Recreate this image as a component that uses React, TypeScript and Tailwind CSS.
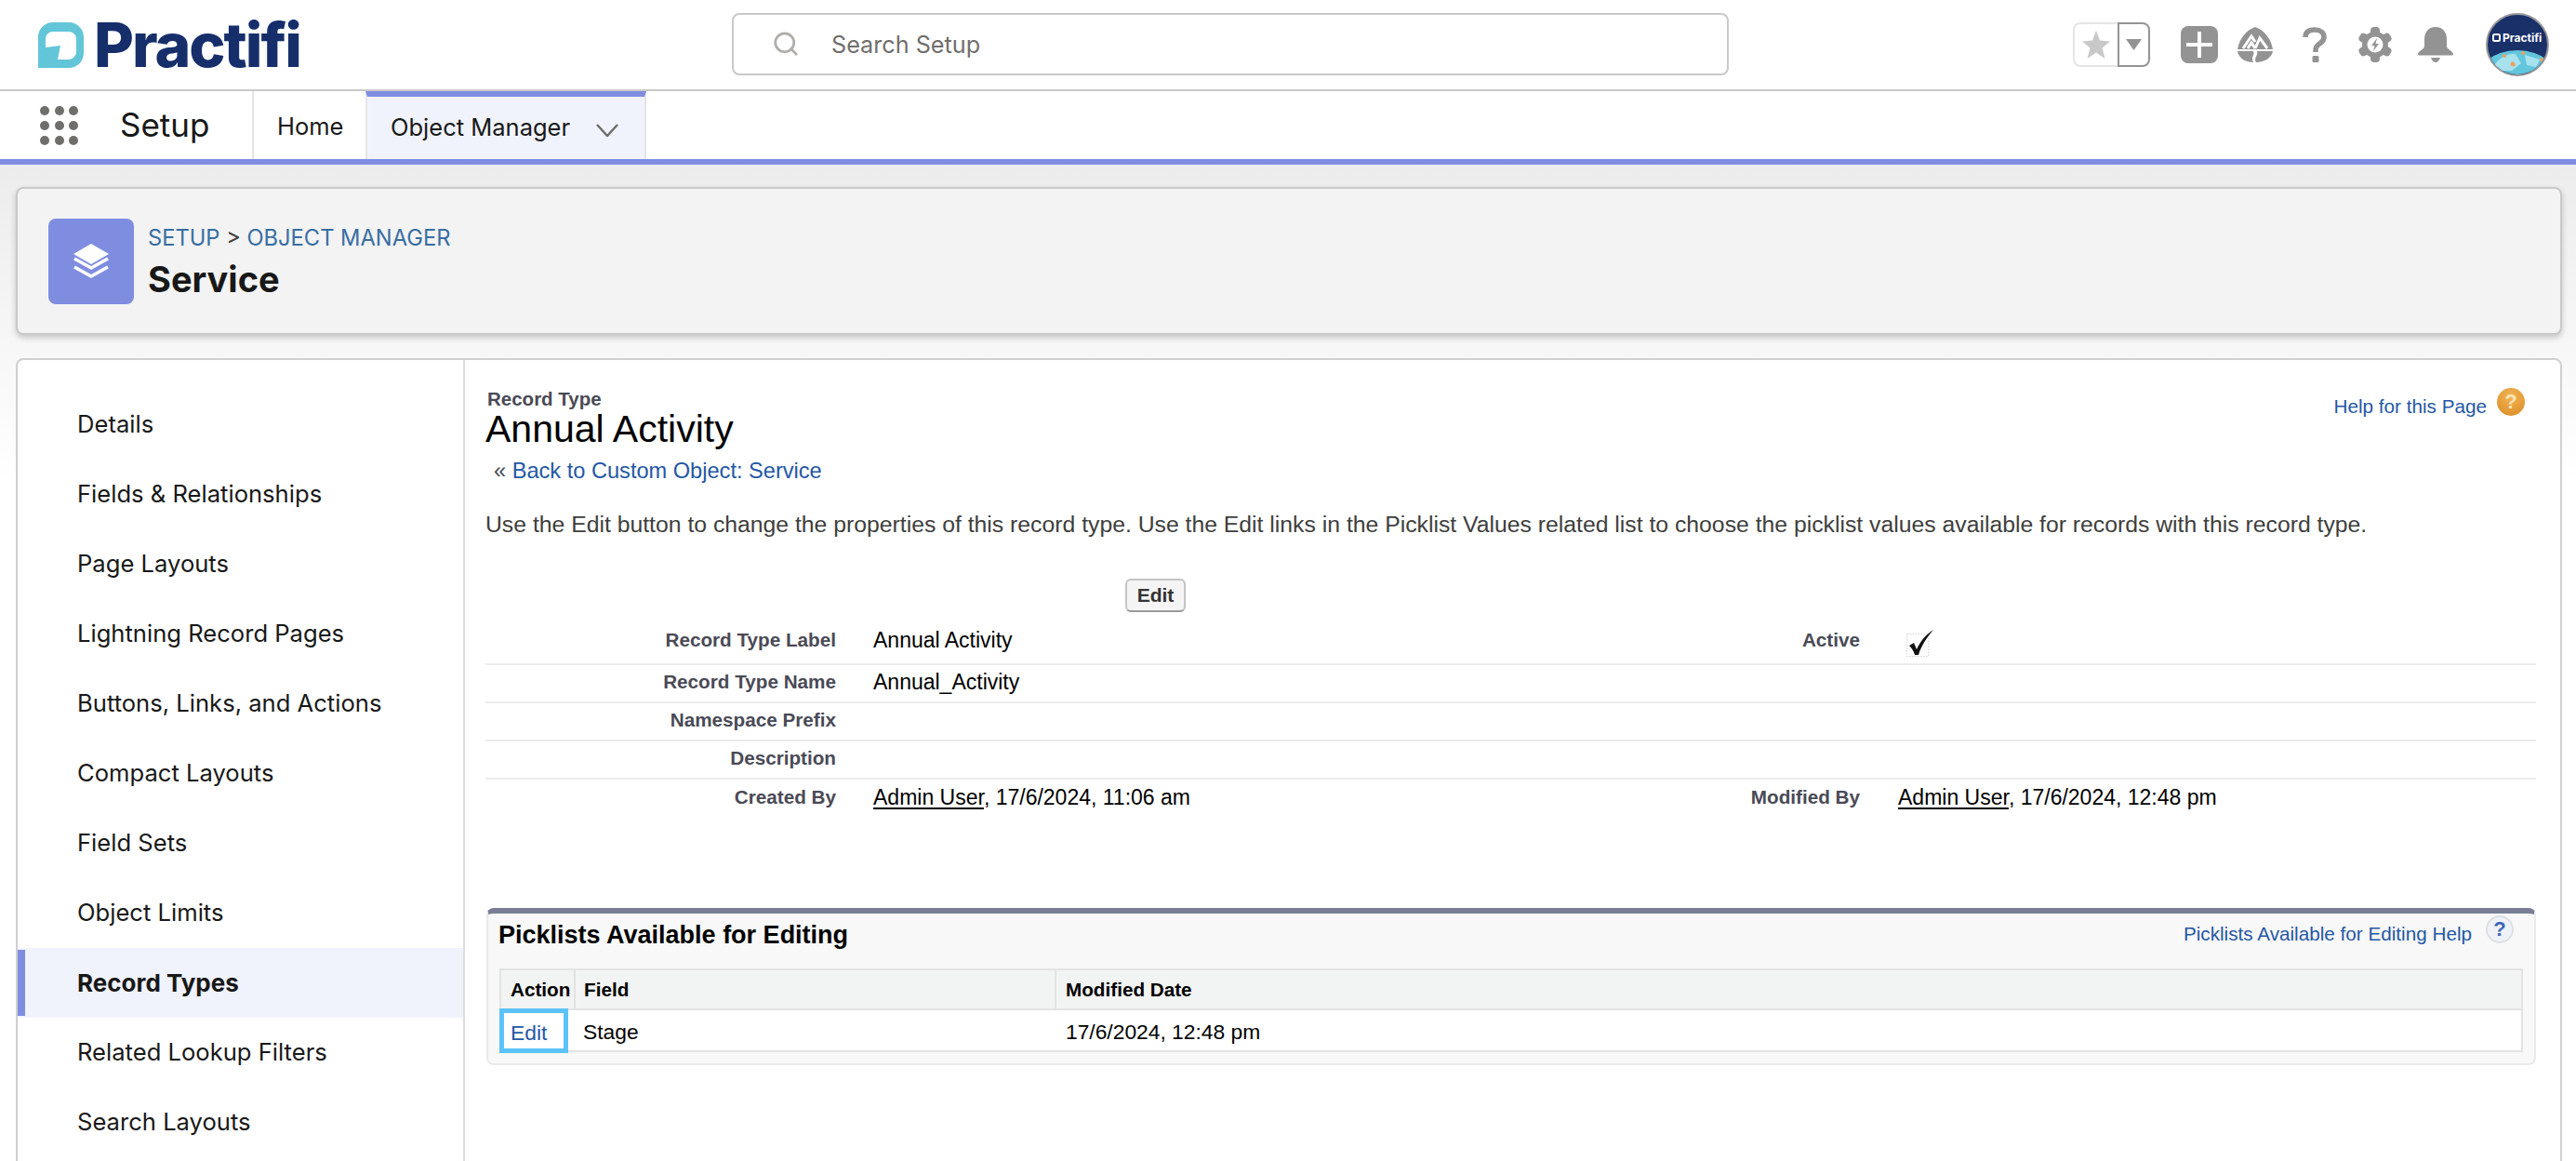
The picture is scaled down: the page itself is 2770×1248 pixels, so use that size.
import { Search } from 'lucide-react';

const sideItems = [
  'Details',
  'Fields & Relationships',
  'Page Layouts',
  'Lightning Record Pages',
  'Buttons, Links, and Actions',
  'Compact Layouts',
  'Field Sets',
  'Object Limits',
  'Record Types',
  'Related Lookup Filters',
  'Search Layouts',
];

const inter = 'font-[Inter,sans-serif]';
const arial = "font-['Liberation_Sans',Arial,sans-serif]";

function LogoMark() {
  return (
    <svg width="49" height="49" viewBox="0 0 49 49" className="shrink-0">
      <path
        fillRule="evenodd"
        fill="#62c6d8"
        d="M0 16C0 7 7 0 16 0H33C42 0 49 7 49 16V33C49 42 42 49 33 49H0ZM8 27V18C8 13 12 10 16 10H33C37 10 41 13 41 18V32C41 36 37 40 33 40H21L24 25Z"
      />
    </svg>
  );
}

function TrailheadIcon() {
  return (
    <svg width="38" height="38" viewBox="0 0 38 38">
      <path fill="#939393" d="M19 0C28 3 36 12 38 24H0C2 12 10 3 19 0Z" />
      <path fill="none" stroke="#fff" strokeWidth="3" d="M6 23L15 10L19 16M11 23L15 17L19 23M19 23L24 12L32 23" />
      <path fill="#939393" d="M0 26H17C19 30 14 32 17 38C8 38 1 33 0 26ZM21 26H38C37 33 29 38 20 38C17 33 23 30 21 26Z" />
    </svg>
  );
}

function HelpIcon() {
  return (
    <svg width="26" height="38" viewBox="0 0 26 38">
      <path fill="none" stroke="#939393" strokeWidth="5.5" d="M3 11C3 5 7 3 13 3C19 3 23 6 23 11C23 16 19 17 16 20C14 22 14 23 14 27" />
      <rect x="10.5" y="31" width="7" height="7" rx="1.5" fill="#939393" />
    </svg>
  );
}

function GearIcon() {
  return (
    <svg width="36" height="38" viewBox="0 0 36 38">
      <g fill="#939393">
        {[0, 60, 120, 180, 240, 300].map((a) => (
          <rect key={a} x="13" y="0" width="10" height="12" rx="4" transform={`rotate(${a} 18 19)`} />
        ))}
        <circle cx="18" cy="19" r="14" />
      </g>
      <circle cx="18" cy="19" r="8.5" fill="#fff" />
      <path fill="#939393" d="M20 12L14 20H17.5L16 26L22 18H18.5Z" />
    </svg>
  );
}

function BellIcon() {
  return (
    <svg width="38" height="38" viewBox="0 0 38 38">
      <path
        fill="#939393"
        d="M19 0C27 0 31 6 31 13V21C31 24 38 26 38 29C38 30 37 30.500 36 30.500H2C1 30.500 0 30 0 29C0 26 7 24 7 21V13C7 6 11 0 19 0Z"
      />
      <path fill="#939393" d="M14 33H24C23 36 21 38 19 38C17 38 15 36 14 33Z" />
    </svg>
  );
}

function Avatar() {
  return (
    <svg width="68" height="68" viewBox="0 0 68 68">
      <defs>
        <clipPath id="avatar-clip">
          <circle cx="34" cy="34" r="32" />
        </clipPath>
      </defs>
      <circle cx="34" cy="34" r="33" fill="#1a3068" stroke="#97989c" strokeWidth="2" />
      <g clipPath="url(#avatar-clip)">
        <ellipse cx="34" cy="80" rx="48" ry="40" fill="#62c6dc" />
        <path fill="#a8e2ee" d="M8 58C14 48 24 43 32 44L38 54L28 62L16 62ZM42 45L58 50L54 58L44 56Z" />
        <circle cx="20" cy="46" r="2" fill="#e8a25c" />
        <circle cx="29" cy="55" r="2.500" fill="#e8a25c" />
        <circle cx="40" cy="43" r="2" fill="#e8a25c" />
        <circle cx="60" cy="50" r="2" fill="#e8a25c" />
      </g>
      <rect x="8" y="23" width="7" height="7" rx="1.5" fill="none" stroke="#fff" strokeWidth="2" />
      <text x="18" y="31" fill="#fff" fontFamily="Inter, sans-serif" fontWeight="700" fontSize="12">
        Practifi
      </text>
    </svg>
  );
}

function TopBar() {
  return (
    <header className={`flex h-[98px] items-center border-b-2 border-[#c9c9c9] bg-white ${inter}`}>
      <div className="flex w-[787px] shrink-0 items-center gap-[11px] pl-[41px]">
        <LogoMark />
        <span className="text-[66px] leading-[60px] font-extrabold tracking-[-2px] text-[#162f6b]">Practifi</span>
      </div>
      <div className="-mt-[2px] flex h-[67px] w-[1072px] shrink-0 items-center rounded-lg border-2 border-[#c9c9c9] pl-[41px]">
        <Search size={30} strokeWidth={2.2} className="text-[#b0adab]" />
        <span className="ml-[34px] pt-[3px] text-[25.200px] text-[#706e6b]">Search Setup</span>
      </div>
      <div className="ml-[370px] flex items-center">
        <div className="flex h-[48px] w-[83px] rounded-lg">
          <div className="flex w-[48px] items-center justify-center rounded-l-lg border-2 border-r-0 border-[#e5e5e5]">
            <svg width="30" height="30" viewBox="0 0 30 30">
              <path fill="#c9c9c9" d="M15 0L19 10.500L30 11.500L21.500 18.500L24.500 30L15 23.500L5.500 30L8.500 18.500L0 11.500L11 10.500Z" />
            </svg>
          </div>
          <div className="flex flex-1 items-center justify-center rounded-r-lg border-2 border-[#949494]">
            <svg width="17" height="12" viewBox="0 0 17 12">
              <path fill="#939393" d="M0 0H17L8.500 12Z" />
            </svg>
          </div>
        </div>
        <div className="ml-[33px] flex h-[40px] w-[40px] items-center justify-center rounded-lg bg-[#939393]">
          <svg width="28" height="28" viewBox="0 0 28 28">
            <path stroke="#fff" strokeWidth="4" d="M14 0V28M0 14H28" />
          </svg>
        </div>
        <div className="ml-[21px]">
          <TrailheadIcon />
        </div>
        <div className="ml-[32px]">
          <HelpIcon />
        </div>
        <div className="ml-[34px]">
          <GearIcon />
        </div>
        <div className="ml-[28px]">
          <BellIcon />
        </div>
        <div className="ml-[35px]">
          <Avatar />
        </div>
      </div>
    </header>
  );
}

function NavBar() {
  return (
    <nav className={`flex h-[79px] border-b-[6px] border-[#7f8de1] bg-white ${inter}`}>
      <div className="flex w-[273px] shrink-0 items-center border-r-2 border-[#e5e5e5] pl-[43px]">
        <div className="grid grid-cols-3 gap-x-[5.500px] gap-y-[6px]">
          {Array.from({ length: 9 }).map((_, i) => (
            <span key={i} className="h-[10px] w-[10px] rounded-full bg-[#706e6b]" />
          ))}
        </div>
        <span className="ml-[45px] text-[35px] text-[#181818]">Setup</span>
      </div>
      <div className="flex w-[120px] shrink-0 items-center pt-[3px] pl-[25px] text-[25.500px] text-[#181818]">Home</div>
      <div className="flex w-[302px] shrink-0 items-center border-x-2 border-t-[6px] border-x-[#e5e5e5] border-t-[#7f8de1] bg-[#f0f3fb] pl-[25px] text-[25.500px] text-[#181818]">
        Object Manager
        <svg width="24" height="14" viewBox="0 0 24 14" className="mt-[4px] ml-[28px]">
          <path fill="none" stroke="#706e6b" strokeWidth="2.500" d="M1 1L12 13L23 1" />
        </svg>
      </div>
    </nav>
  );
}

function PageHead() {
  return (
    <div className={`flex h-[159px] items-center rounded-lg border-2 border-[#c9c9c9] bg-[#f3f3f3] pl-[33px] shadow-[0_3px_6px_rgba(0,0,0,0.2)] ${inter}`}>
      <div className="flex h-[92px] w-[92px] items-center justify-center rounded-lg bg-[#7f8de1]">
        <svg width="38" height="37" viewBox="0 0 38 37">
          <path fill="#fff" d="M19 0L38 11L19 22L0 11Z" />
          <path fill="none" stroke="#fff" strokeWidth="3.500" d="M1 16L19 26L37 16M1 25L19 35L37 25" />
        </svg>
      </div>
      <div className="ml-[15px]">
        <div className="text-[23.700px] leading-[34px] text-[#3a3a3a]">
          <span className="text-[#376ea3]">SETUP</span> &gt; <span className="text-[#376ea3]">OBJECT MANAGER</span>
        </div>
        <div className="mt-[4px] text-[38px] leading-[46px] font-bold text-[#181818]">Service</div>
      </div>
    </div>
  );
}

function SideNav() {
  return (
    <aside className={`w-[481px] shrink-0 border-r-2 border-[#dddddd] pt-[32px] ${inter}`}>
      {sideItems.map((item) =>
        item === 'Record Types' ? (
          <div key={item} className="flex h-[75px] items-center bg-[#f0f3fb] text-[26px] font-bold text-[#181818]">
            <span className="h-[71px] w-[8px] bg-[#7f8de1]" />
            <span className="ml-[56px]">{item}</span>
          </div>
        ) : (
          <div key={item} className="flex h-[75px] items-center pl-[64px] text-[25.600px] text-[#181818]">
            {item}
          </div>
        ),
      )}
    </aside>
  );
}

function Label({ children, wide }: { children?: React.ReactNode; wide?: boolean }) {
  return (
    <div className={`shrink-0 text-right text-[20.700px] font-bold text-[#4a4a56] ${wide ? 'w-[261px]' : 'w-[377px]'}`}>
      {children}
    </div>
  );
}

function DetailRow({ tall, children, last }: { tall?: boolean; last?: boolean; children: React.ReactNode }) {
  return (
    <div className={`flex leading-[24px] ${tall ? 'h-[57px] pt-[18px]' : last ? 'h-[40px] pt-[7px]' : 'h-[41px] pt-[6px]'} ${last ? '' : 'border-b-2 border-[#ececec]'}`}>
      {children}
    </div>
  );
}

function Detail() {
  return (
    <div className="text-[23px] text-black">
      <div className="h-[36px]">
        <button className="ml-[688px] h-[36px] w-[65px] rounded-md border-2 border-[#c4c4c4] border-b-[#9a9a9a] bg-[#f4f4f4] text-[21px] font-bold text-[#333]">
          Edit
        </button>
      </div>
      <DetailRow tall>
        <Label>Record Type Label</Label>
        <div className="ml-[40px] w-[800px] shrink-0">Annual Activity</div>
        <Label wide>Active</Label>
        <svg width="30" height="30" viewBox="0 0 30 30" className="mt-[1px] ml-[50px]">
          <rect x="0.500" y="4.500" width="23" height="24" fill="none" stroke="#d0d0d0" strokeDasharray="1.500 1.500" />
          <path fill="#111" d="M3 17L8 14L11 21C15 12 21 5 29 0C22 8 16 17 13 27H9C8 23 6 20 3 17Z" />
        </svg>
      </DetailRow>
      <DetailRow>
        <Label>Record Type Name</Label>
        <div className="ml-[40px]">Annual_Activity</div>
      </DetailRow>
      <DetailRow>
        <Label>Namespace Prefix</Label>
      </DetailRow>
      <DetailRow>
        <Label>Description</Label>
      </DetailRow>
      <DetailRow last>
        <Label>Created By</Label>
        <div className="ml-[40px] w-[800px] shrink-0">
          <span className="underline decoration-2 underline-offset-[3px]">Admin User</span>, 17/6/2024, 11:06 am
        </div>
        <Label wide>Modified By</Label>
        <div className="ml-[41px]">
          <span className="underline decoration-2 underline-offset-[3px]">Admin User</span>, 17/6/2024, 12:48 pm
        </div>
      </DetailRow>
    </div>
  );
}

function Picklists() {
  return (
    <section className="mt-[98px] ml-[1px] rounded-lg border-x-2 border-t-[6px] border-b-2 border-x-[#eaeaea] border-b-[#eaeaea] border-t-[#797e96] bg-[#f8f8f8] px-[12px] pb-[12px]">
      <div className="flex h-[59px] items-start justify-between">
        <h3 className="-ml-[1px] pt-[9px] text-[27px] leading-[28px] font-bold text-black">Picklists Available for Editing</h3>
        <div className="mt-[2px] mr-[10px] flex items-start">
          <a className="pt-[6px] text-[20.700px] leading-[28px] text-[#2457a5]">Picklists Available for Editing Help</a>
          <span className="ml-[15px] flex h-[30px] w-[30px] items-center justify-center rounded-full border-2 border-[#dcdfe4] bg-[#eef1f7] text-[22px] leading-none font-bold text-[#3f66b8]">
            ?
          </span>
        </div>
      </div>
      <div className="border-2 border-[#e3e3e3] bg-white">
        <div className="grid h-[43px] grid-cols-[80px_517px_1fr] items-stretch border-b-2 border-[#e3e3e3] bg-[#f2f3f3] text-[20.700px] font-bold text-black">
          <div className="flex items-center border-r-2 border-[#e3e3e3] pl-[10px]">Action</div>
          <div className="flex items-center border-r-2 border-[#e3e3e3] pl-[9px]">Field</div>
          <div className="flex items-center pl-[10px]">Modified Date</div>
        </div>
        <div className="grid h-[43px] grid-cols-[80px_517px_1fr] items-center text-[22.800px] text-black">
          <a className="-mt-[2px] -ml-[2px] flex h-[48px] w-[74px] items-center border-[5px] border-[#5bc3f9] bg-white pt-[4px] pl-[7px] text-[#2457a5]">
            Edit
          </a>
          <div className="pl-[8px]">Stage</div>
          <div className="pl-[10px]">17/6/2024, 12:48 pm</div>
        </div>
      </div>
    </section>
  );
}

function Content() {
  return (
    <main className={`min-w-0 flex-1 pt-[30px] pr-[26px] pl-[22px] ${arial}`}>
      <div className="flex items-start justify-between">
        <div>
          <div className="ml-[2px] text-[20.500px] leading-[24px] font-bold text-[#4a4a56]">Record Type</div>
          <h1 className="-mt-[2px] text-[41px] leading-[44px] text-black">Annual Activity</h1>
        </div>
        <div className="mr-[12px] flex items-start">
          <a className="pt-[8px] text-[20.700px] leading-[24px] text-[#2457a5]">Help for this Page</a>
          <span className="ml-[11px] flex h-[30px] w-[30px] items-center justify-center rounded-full bg-[radial-gradient(circle_at_50%_30%,#f2b554,#d98a25)] text-[22px] leading-none font-bold text-[#fbe3b5]">
            ?
          </span>
        </div>
      </div>
      <div className="mt-[11px] pl-[9px] text-[23.600px] leading-[24px]">
        <span className="text-[#4a4a56]">«</span> <a className="text-[#2457a5]">Back to Custom Object: Service</a>
      </div>
      <p className="mt-[32px] text-[24.750px] leading-[28px] text-[#3e3e3c]">
        Use the Edit button to change the properties of this record type. Use the Edit links in the Picklist Values related list to choose the picklist values available for records with this record type.
      </p>
      <div className="mt-[44px]">
        <Detail />
      </div>
      <Picklists />
    </main>
  );
}

export default function App() {
  return (
    <div className="h-[1248px] w-[2770px] overflow-hidden bg-white">
      <TopBar />
      <NavBar />
      <div className="h-[1071px] bg-[linear-gradient(#ececec,#ffffff_340px)] pt-[24px] pr-[15px] pl-[17px]">
        <PageHead />
        <div className="mt-[25px] flex h-[900px] rounded-t-lg border-2 border-[#d0d0d0] bg-white">
          <SideNav />
          <Content />
        </div>
      </div>
    </div>
  );
}
